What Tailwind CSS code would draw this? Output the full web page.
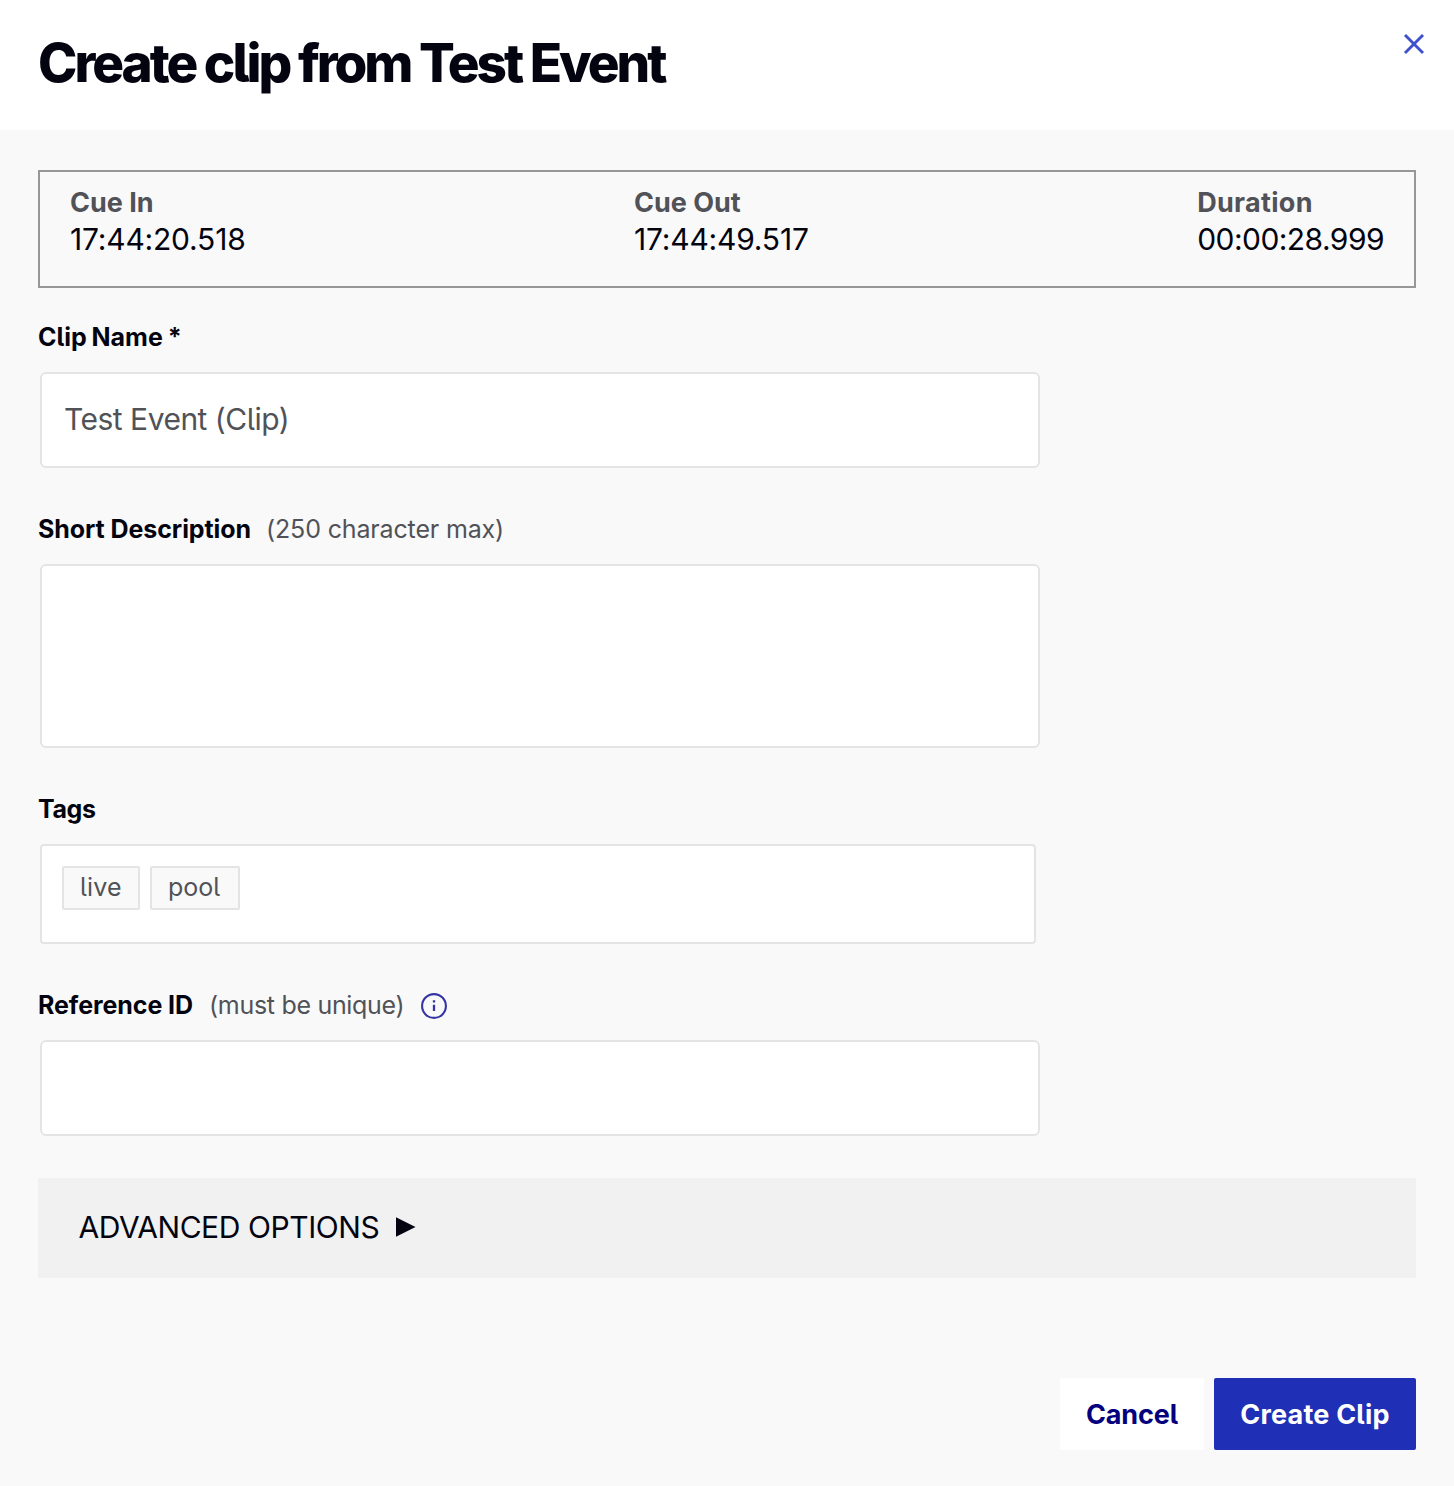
<!DOCTYPE html>
<html lang="en">
<head>
<meta charset="utf-8">
<title>Create clip</title>
<script src="https://cdn.jsdelivr.net/npm/@tailwindcss/browser@4"></script>
</head>
<body class="bg-[#f9f9f9] font-['Inter',sans-serif] text-[#03040f] [font-feature-settings:'cv05']">
<div class="flex min-h-[1486px] flex-col">
  <header class="flex h-[130px] items-start justify-between bg-white pt-[33px] pr-[29px] pl-[38px]">
    <h1 class="text-[53px] leading-[60px] font-extrabold tracking-[-3px] whitespace-nowrap">Create clip from Test Event</h1>
    <button aria-label="Close" class="mt-px">
      <svg class="block size-[22px]" viewBox="0 0 22 22" fill="none" stroke="#4150cc" stroke-width="2.9"><path d="M2 1l18 18M20 1L2 19"/></svg>
    </button>
  </header>

  <main class="flex flex-col px-[38px] pt-10">
    <dl class="flex h-[118px] justify-between border-2 border-[#979797] px-[30px] pt-[13px]">
      <div>
        <dt class="text-[27px] leading-9 font-bold text-[#515257]">Cue In</dt>
        <dd class="text-[30px] leading-[37px] tracking-[-0.2px]">17:44:20.518</dd>
      </div>
      <div>
        <dt class="text-[27px] leading-9 font-bold text-[#515257]">Cue Out</dt>
        <dd class="text-[30px] leading-[37px] tracking-[-0.2px]">17:44:49.517</dd>
      </div>
      <div>
        <dt class="text-[27px] leading-9 font-bold tracking-[0.3px] text-[#515257]">Duration</dt>
        <dd class="text-[30px] leading-[37px] tracking-[-0.55px]">00:00:28.999</dd>
      </div>
    </dl>

    <form class="mt-[29px] flex flex-col">
      <label class="text-[25px] leading-10 font-bold tracking-[-0.02px] [word-spacing:-1px]">Clip Name *</label>
      <div class="mt-[15px] ml-0.5 flex h-24 w-[1000px] items-center rounded-md border-2 border-[#e4e4e4] bg-white px-[22px] pb-0.5 text-[30px] tracking-[-0.5px] text-[#515257]">Test Event (Clip)</div>

      <label class="mt-[41px] flex gap-[15px] text-[25px] leading-10"><span class="font-bold tracking-[-0.08px]">Short Description</span><span class="tracking-[-0.15px] text-[#515257]">(250 character max)</span></label>
      <div class="mt-[15px] ml-0.5 h-[184px] w-[1000px] rounded-md border-2 border-[#e4e4e4] bg-white"></div>

      <label class="mt-[41px] text-[25px] leading-10 font-bold tracking-[-0.39px]">Tags</label>
      <div class="mt-[15px] ml-0.5 flex h-[100px] w-[996px] items-start gap-2.5 rounded border-2 border-[#e4e4e4] bg-white p-5 text-[25px] leading-[38px] text-[#515257]">
        <span class="h-11 w-[78px] rounded-xs border-2 border-[#e4e4e4] bg-[#f9f9f9] pl-4 tracking-[0.2px]">live</span>
        <span class="h-11 w-[90px] rounded-xs border-2 border-[#e4e4e4] bg-[#f9f9f9] pl-4">pool</span>
      </div>

      <label class="mt-[41px] flex items-center text-[25px] leading-10"><span class="font-bold tracking-[-0.08px]">Reference ID</span><span class="ml-4 tracking-[-0.3px] text-[#515257]">(must be unique)</span>
        <svg class="mt-0.5 ml-[17px] size-[26px]" viewBox="0 0 26 26" fill="none"><circle cx="13" cy="13" r="11.9" stroke="#3434a4" stroke-width="2.1"/><path d="M13 11.8v6.2M13 7.3v2.1" stroke="#3434a4" stroke-width="2.3"/></svg>
      </label>
      <div class="mt-[15px] ml-0.5 h-24 w-[1000px] rounded-md border-2 border-[#e4e4e4] bg-white"></div>
    </form>

    <button class="mt-[42px] flex h-[100px] items-center gap-[17px] bg-[#f1f1f1] pl-[40.5px] pb-px text-[30px] tracking-[-0.43px]"><span>ADVANCED OPTIONS</span><svg class="mb-0.5 h-5 w-5" viewBox="0 0 20 20" fill="currentColor"><path d="M0 0.3L19.5 10L0 19.8z"/></svg></button>

    <footer class="mt-[100px] flex justify-end gap-2.5 text-[27px] font-bold">
      <button class="h-[72px] w-36 rounded-xs bg-white pt-0.5 tracking-[-0.1px] text-[#04007e]">Cancel</button>
      <button class="h-[72px] w-[202px] rounded-xs bg-[#1f30b7] pt-0.5 tracking-[0.2px] text-white">Create Clip</button>
    </footer>
  </main>
</div>
</body>
</html>
